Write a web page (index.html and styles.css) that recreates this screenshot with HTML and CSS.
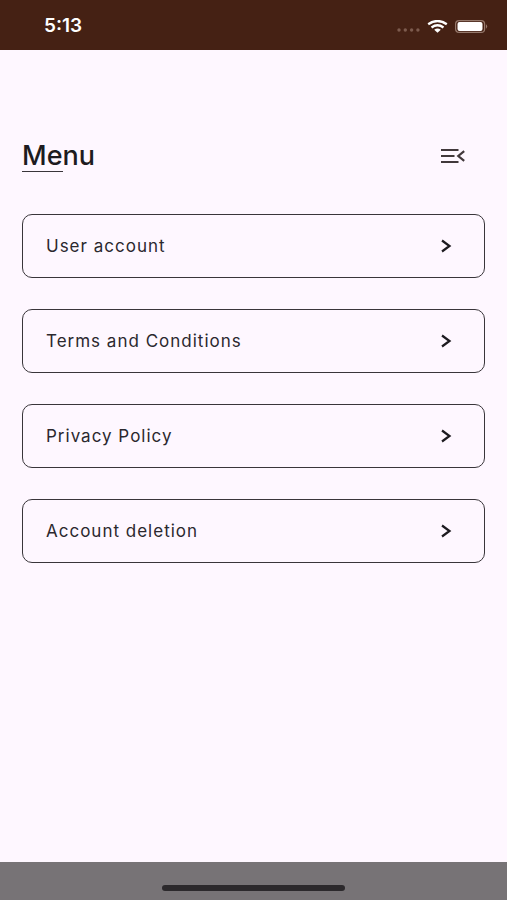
FILE: index.html
```html
<!DOCTYPE html>
<html lang="en">
<head>
<meta charset="utf-8">
<meta name="viewport" content="width=device-width, initial-scale=1">
<title>Menu</title>
<link rel="stylesheet" href="styles.css">
</head>
<body>
<div class="status-bar">
  <time class="clock">5:13</time>
  <div class="indicators">
    <svg class="signal" width="23" height="5" viewBox="0 0 23 5" aria-hidden="true"><circle cx="2" cy="2" r="1.7"/><circle cx="8.300" cy="2" r="1.7"/><circle cx="14.600" cy="2" r="1.7"/><circle cx="20.900" cy="2" r="1.7"/></svg>
    <svg class="wifi" width="21" height="13" viewBox="0 0 21 13" aria-hidden="true"><path d="M1.2 4.2Q10.500 -2.200 19.800 4.200M4.500 7.500Q10.500 3.100 16.500 7.500" fill="none" stroke="#fff" stroke-width="2.300"/><path d="M7.200 9.700Q10.500 7.100 13.800 9.700L10.500 12.700Z" fill="#fff"/></svg>
    <svg class="battery" width="33" height="13" viewBox="0 0 33 13" aria-hidden="true"><rect x=".6" y=".6" width="29" height="11.800" rx="3.500" fill="none" stroke="#96796c" stroke-width="1.200"/><rect x="2.500" y="2" width="25" height="9" rx="2" fill="#fff"/><path d="M31 4.300Q33.400 6.500 31 8.700Z" fill="#96796c"/></svg>
  </div>
</div>
<main class="page">
  <header class="heading">
    <h1 class="title">Menu</h1>
    <button class="close" type="button" aria-label="Close menu">
      <svg width="26" height="16" viewBox="0 0 26 16" aria-hidden="true"><path d="M1 2H18.500M1 8H14.500M1 14H18.500M24.200 3.200L18.300 8L24.200 12.800" fill="none" stroke="#41383b" stroke-width="2.200"/></svg>
    </button>
  </header>
  <nav class="menu">
    <a class="item" href="#account">User account<svg class="chevron" width="12" height="14" viewBox="0 0 12 14" aria-hidden="true"><path d="M2 1.500L9.500 7L2 12.500"/></svg></a>
    <a class="item" href="#terms">Terms and Conditions<svg class="chevron" width="12" height="14" viewBox="0 0 12 14" aria-hidden="true"><path d="M2 1.500L9.500 7L2 12.500"/></svg></a>
    <a class="item" href="#privacy">Privacy Policy<svg class="chevron" width="12" height="14" viewBox="0 0 12 14" aria-hidden="true"><path d="M2 1.500L9.500 7L2 12.500"/></svg></a>
    <a class="item" href="#deletion">Account deletion<svg class="chevron" width="12" height="14" viewBox="0 0 12 14" aria-hidden="true"><path d="M2 1.500L9.500 7L2 12.500"/></svg></a>
  </nav>
</main>
<footer class="home-bar"><div class="home-indicator"></div></footer>
</body>
</html>
```
FILE: styles.css
```css
* {
  box-sizing: border-box;
}

body {
  display: flex;
  flex-direction: column;
  min-height: 100vh;
  margin: 0;
  background: #fef7ff;
  color: #1d1b20;
  font-family: Inter, "Liberation Sans", sans-serif;
}

.status-bar {
  display: flex;
  align-items: center;
  justify-content: space-between;
  padding: 14px 19px 12px 44px;
  background: #452114;
  color: #fff;
}

.clock {
  font-size: 19px;
  font-weight: 600;
  line-height: 24px;
}

.indicators {
  display: flex;
  align-items: center;
  gap: 7px;
}

.signal {
  align-self: flex-end;
  fill: #7d5b4e;
}

.page {
  flex: 1;
  padding: 88px 22px 32px;
}

.heading {
  display: flex;
  align-items: center;
  justify-content: space-between;
  padding-right: 19px;
  margin-bottom: 40px;
}

.title {
  position: relative;
  margin: 0;
  font-size: 27px;
  font-weight: 500;
  line-height: 36px;
}

.title::after {
  content: "";
  position: absolute;
  bottom: 2px;
  left: 0;
  width: 41px;
  height: 1px;
  background: #39353a;
}

.close {
  display: flex;
  padding: 0;
  border: 0;
  background: none;
}

.menu {
  display: grid;
  gap: 31px;
}

.item {
  display: flex;
  align-items: center;
  justify-content: space-between;
  padding: 20px 32px 20px 23px;
  border: 1px solid #39353a;
  border-radius: 10px;
  color: #2b282e;
  font-size: 17px;
  letter-spacing: 1px;
  line-height: 22px;
  text-decoration: none;
}

.chevron {
  fill: none;
  stroke: #1d1b20;
  stroke-width: 2.2;
}

.home-bar {
  display: flex;
  justify-content: center;
  padding: 23px 0 9px;
  background: #777376;
}

.home-indicator {
  width: 36%;
  height: 6px;
  border-radius: 3px;
  background: #2c292c;
}
```
